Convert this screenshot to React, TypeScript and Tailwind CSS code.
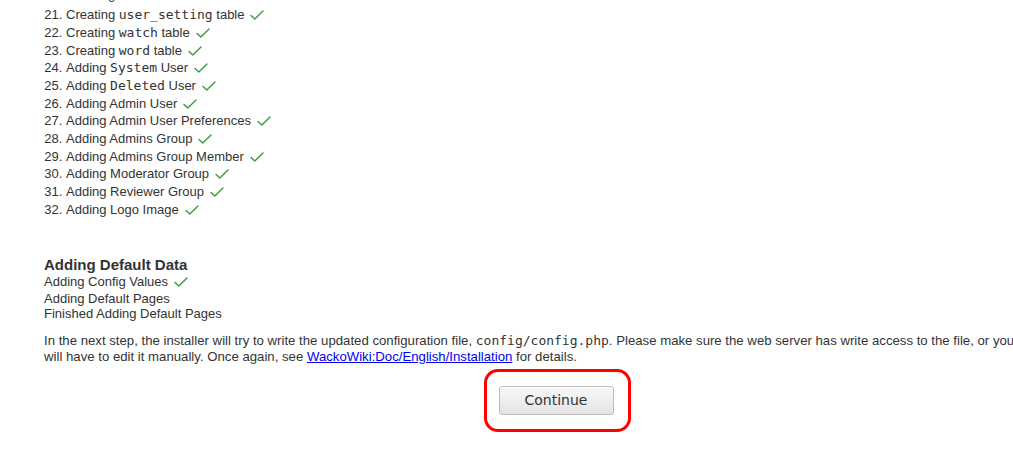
import React from "react";

type Part = { t: string; mono?: boolean };

// install steps, first one is only half visible at the top
const steps: Part[][] = [
  [{ t: "Creating " }, { t: "user", mono: true }, { t: " table" }],
  [{ t: "Creating " }, { t: "user_setting", mono: true }, { t: " table" }],
  [{ t: "Creating " }, { t: "watch", mono: true }, { t: " table" }],
  [{ t: "Creating " }, { t: "word", mono: true }, { t: " table" }],
  [{ t: "Adding " }, { t: "System", mono: true }, { t: " User" }],
  [{ t: "Adding " }, { t: "Deleted", mono: true }, { t: " User" }],
  [{ t: "Adding Admin User" }],
  [{ t: "Adding Admin User Preferences" }],
  [{ t: "Adding Admins Group" }],
  [{ t: "Adding Admins Group Member" }],
  [{ t: "Adding Moderator Group" }],
  [{ t: "Adding Reviewer Group" }],
  [{ t: "Adding Logo Image" }],
];

function Check() {
  return (
    <svg
      width="14"
      height="10"
      viewBox="0 0 14 10"
      className="inline-block ml-[6px] align-[-1px]"
      fill="none"
      stroke="#3c9a3c"
      strokeWidth="1.4"
      strokeLinecap="round"
      strokeLinejoin="round"
    >
      <path d="M1 5.5 L4.8 9 L13 1" />
    </svg>
  );
}

export default function App() {
  return (
    <div className="w-[1013px] h-[452px] overflow-hidden bg-white text-[#333] text-[13px] font-['Liberation_Sans',Arial,sans-serif]">
      <div className="ml-[44px] w-[1026px]">
        {/* Liste der Schritte */}
        <ol start={20} className="list-decimal pl-[22px] -mt-[14.5px]">
          {steps.map((parts, i) => (
            <li key={i} className={i === 0 ? "leading-[17.7px] h-[20.7px]" : "leading-[17.7px] h-[17.7px]"}>
              {parts.map((p, j) =>
                p.mono ? (
                  <code key={j} className="font-['DejaVu_Sans_Mono',monospace] text-[13px]">
                    {p.t}
                  </code>
                ) : (
                  <span key={j}>{p.t}</span>
                )
              )}
              <Check />
            </li>
          ))}
        </ol>

        <h2 className="mt-[37.6px] text-[15px] font-bold leading-[17px]">Adding Default Data</h2>
        <div className="leading-[18px] h-[18px]">
          Adding Config Values
          <Check />
        </div>
        <div className="leading-[15px]">Adding Default Pages</div>
        <div className="leading-[15px]">Finished Adding Default Pages</div>

        <p className="mt-[12px] max-w-[988px] leading-[16px] text-[13.2px]">
          In the next step, the installer will try to write the updated configuration file,{" "}
          <code className="font-['DejaVu_Sans_Mono',monospace] text-[13px]">config/config.php</code>. Please make
          sure the web server has write access to the file, or you will have to edit it manually. Once again, see{" "}
          <a href="#" className="text-[#0000ee] underline">
            WackoWiki:Doc/English/Installation
          </a>{" "}
          for details.
        </p>

        <div className="flex justify-center mt-[4px]">
          <div className="border-[3px] border-[#ff0000] rounded-[14px] pl-[12px] pr-[14px] py-[14px]">
            <button
              type="button"
              className="w-[115px] h-[29px] rounded-[3px] border border-[#bdbdbd] bg-gradient-to-b from-[#f8f8f8] to-[#e4e4e4] text-[#333] text-[14px] font-['DejaVu_Sans',sans-serif] shadow-[inset_0_1px_0_#fff]"
            >
              Continue
            </button>
          </div>
        </div>
      </div>
    </div>
  );
}
